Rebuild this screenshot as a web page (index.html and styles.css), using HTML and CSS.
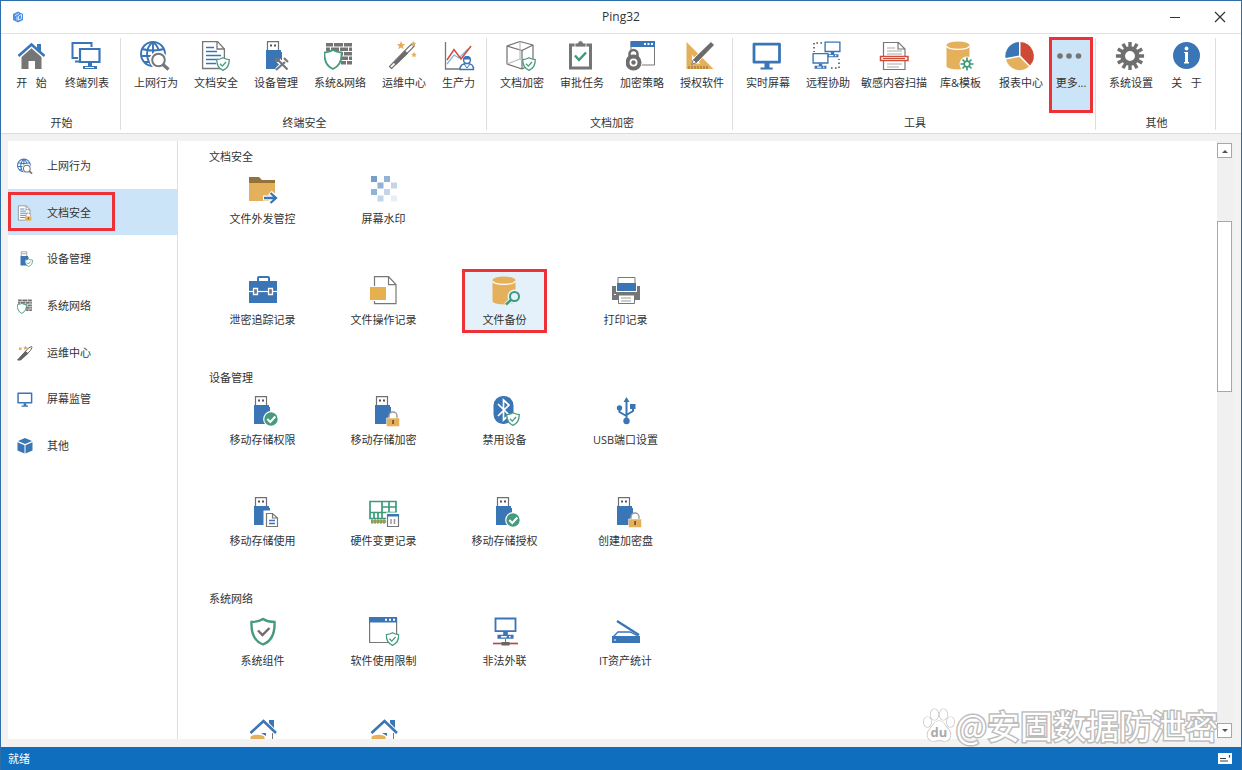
FILE: index.html
```html
<!DOCTYPE html>
<html lang="zh-CN">
<head>
<meta charset="utf-8">
<title>Ping32</title>
<link rel="stylesheet" href="styles.css">
</head>
<body>
<svg class="sprite" aria-hidden="true">
  <defs>
    <symbol id="shield" viewBox="0 0 14 14"><path d="M7 .8C9 2 11 2.5 13.2 2.6 13.4 8 11.500 11.500 7 13.300 2.500 11.500.600 8 .800 2.600 3 2.500 5 2 7 .8z" fill="#fff" stroke="#479a7c" stroke-width="1.300"/><path d="M4 6.800l2.300 2.300L10 5" fill="none" stroke="#479a7c" stroke-width="1.300"/></symbol>
    <symbol id="stick" viewBox="0 0 32 32"><path d="M8.500 11V1.600h11V11" fill="#fff" stroke="#6f6f6f" stroke-width="1.200"/><path d="M11 4.500h2v2h-2zM15 4.500h2v2h-2z" fill="#555"/><path d="M7 10h15v2h1v17H7z" fill="#3a75b5"/></symbol>
    <symbol id="globe" viewBox="0 0 32 32"><g fill="none" stroke="#3a75b5" stroke-width="1.900"><circle cx="13" cy="14" r="12"/><path d="M13 2C5 8 5 20 13 26M13 2c8 6 8 18 0 24M13 2v24M2 9q11 3 22 0M1 16h24M4 22h18"/></g><path d="M22 24l6 5.500" stroke="#fff" stroke-width="6"/><circle cx="18.500" cy="20" r="6.500" fill="#fff" stroke="#fff" stroke-width="5"/><circle cx="18.500" cy="20" r="6.300" fill="#fff" stroke="#777" stroke-width="2"/><path d="M23 24.500l5.500 5" stroke="#777" stroke-width="3.200"/></symbol>
    <symbol id="doc" viewBox="0 0 32 32"><path d="M2.600 1.600h15L24.400 9v19.500H2.600z" fill="#fff" stroke="#777" stroke-width="1.300"/><path d="M17 1.600V9h7.400" fill="none" stroke="#777" stroke-width="1.300"/><path d="M6 7.500h8M6 11.500h11M6 15.500h15M6 19.500h12M6 23.500h10" stroke="#3a75b5" stroke-width="1.500"/></symbol>
    <symbol id="lock" viewBox="0 0 14 16"><path d="M2 6h10v3H2z" fill="#fff"/><path d="M3 8V5a4 4 0 0 1 8 0v3" fill="#fff" stroke="#999" stroke-width="1.400"/><path d="M.500 7h13v8.500H.500z" fill="#e5b05b" stroke="#fff" stroke-width=".500"/><path d="M6.200 9h1.800v4H6.200z" fill="#76552a"/></symbol>
    <symbol id="bricks" viewBox="0 0 32 32"><path d="M2 3h7v3.500H2zM10 3h9v3.500h-9zM20 3h8v3.500h-8zM2 7.500h4V11H2zM7 7.500h8V11H7zM16 7.500h8V11h-8zM25 7.500h3V11h-3zM10 12h9v3.500h-9zM20 12h8v3.500h-8zM16 16.500h8V20h-8zM25 16.500h3V20h-3zM17 21h5v3.500h-5zM23 21h5v3.500h-5z" fill="#747474"/><path d="M9 10c3 2 5 2 8.500 2.500C18 20 15.500 26 9 29 2.500 26 0 20 .500 12.500 4 12 6 12 9 10z" fill="#fff" stroke="#479a7c" stroke-width="1.800"/></symbol>
    <symbol id="wand" viewBox="0 0 32 32"><path d="M3.500 28.500l-2-2L21 6.500l3.500-3 2 2-3 3.500z" fill="#fff" stroke="#777" stroke-width="1.200" stroke-linejoin="round"/><path d="M5.500 22.500L17 10.500l3 3L8 25z" fill="#6c6c6c"/><g fill="#e5ad5b"><path d="M13 1l1.200 3 3 .300-2.300 2 .700 3-2.600-1.700-2.600 1.700.700-3-2.300-2 3-.300zM25.500 1l.900 1.700 1.900.200-1.400 1.300.300 2-1.700-1-1.700 1 .300-2-1.400-1.300 1.900-.200zM26 12l.900 1.700 1.900.200-1.400 1.300.300 2-1.700-1-1.700 1 .300-2-1.400-1.300 1.900-.200z"/></g></symbol>
    <symbol id="monitor" viewBox="0 0 32 32"><path d="M2 4.200h25.500v18H2z" fill="#fff" stroke="#3a75b5" stroke-width="2.800" stroke-linejoin="round"/><path d="M12.500 23h5v4.500h3.200v2H8.500v-2h4z" fill="#3a75b5"/></symbol>
    <symbol id="cylinder" viewBox="0 0 32 32"><path d="M1.500 5v21c0 4.500 23 4.500 23 0V5z" fill="#e5b05b"/><ellipse cx="13" cy="5" rx="11.500" ry="3.500" fill="#e5b05b"/><path d="M1.500 6c2 4.500 21 4.500 23 0" fill="none" stroke="#fff" stroke-width="1.200"/></symbol>
    <symbol id="window" viewBox="0 0 32 32"><path d="M1.600 2h27v24.500h-27z" fill="#fff" stroke="#777" stroke-width="1.200"/><path d="M1 1h28v5.500H1z" fill="#3a75b5"/><path d="M17 2.800h2v2h-2zM21 2.800h2v2h-2zM25 2.800h2v2h-2z" fill="#fff"/></symbol>
    <symbol id="pc" viewBox="0 0 20 20"><path d="M1.300 1.300h17.400v11H1.300z" fill="#fff" stroke="#3a75b5" stroke-width="1.600"/><path d="M8 13h4v2.500h5V19H3v-3.500h5z" fill="#3a75b5"/><path d="M6 17.200h5M13 17.200h1.500" stroke="#fff" stroke-width="1.200"/></symbol>
    <symbol id="ok" viewBox="0 0 16 16"><circle cx="8" cy="8" r="7.300" fill="#479a7c" stroke="#fff" stroke-width="1.200"/><path d="M4.300 8l3 3 5-5.500" fill="none" stroke="#fff" stroke-width="2"/></symbol>
    <symbol id="house" viewBox="0 0 32 32"><path d="M22 3h5v8l-5-5z" fill="#3a75b5"/><path d="M3.500 16L16.500 4 29 16" fill="none" stroke="#3a75b5" stroke-width="2.600"/><path d="M25.500 16v14" stroke="#777"/><path d="M14 16h5v3z" fill="#3a75b5"/><ellipse cx="10.500" cy="20" rx="7" ry="2.200" fill="#e5b05b"/><path d="M3.500 20h14v9h-14z" fill="#e5b05b"/></symbol>
    <symbol id="gear" viewBox="0 0 32 32"><g fill="none" stroke="currentColor"><circle cx="16" cy="16" r="7.800" stroke-width="5"/><path stroke-width="3.600" d="M16 1v6M16 25v6M1 16h6M25 16h6M8.500 3l3 5.200M20.500 23.800l3 5.200M3 8.500l5.200 3M23.800 20.500l5.200 3M3 23.500l5.200-3M23.800 11.500l5.200-3M8.500 29l3-5.200M20.500 8.200l3-5.200"/></g></symbol>
  </defs>
</svg>

<div class="app">
  <header class="titlebar">
    <svg class="logo" viewBox="0 0 12 12"><path d="M6 .500l5 2.500v6L6 11.500 1 9V3z" fill="#4c8fe8"/><path d="M3 4.500l4-2M5 5.500v4M6.500 5l3-1.500v4L6.500 9z" fill="none" stroke="#d6e8ff"/></svg>
    <h1>Ping32</h1>
    <div class="controls">
      <button aria-label="最小化"><svg viewBox="0 0 12 12"><path d="M1 6.500h10" stroke="#333"/></svg></button>
      <button aria-label="关闭"><svg viewBox="0 0 12 12"><path d="M1 1l10 10M11 1L1 11" stroke="#333" stroke-width="1.200"/></svg></button>
    </div>
  </header>

  <nav class="ribbon">
    <section class="group">
      <div class="items">
        <button class="tool short"><svg class="icon" viewBox="0 0 32 32"><path d="M21 4h4v10l-4-4z" fill="#3a75b5"/><path d="M5.500 16.500l10-9 10 9V29H19v-8h-6.500v8h-7z" fill="#757575"/><path d="M2.500 16.500L15.500 5l13 11.500" fill="none" stroke="#fff" stroke-width="5"/><path d="M21 4h4v8l-4-4z" fill="#3a75b5"/><path d="M2.500 16L15.500 4.500l13 11.500" fill="none" stroke="#3a75b5" stroke-width="2.600"/></svg><span>开&ensp; 始</span></button>
        <button class="tool"><svg class="icon" viewBox="0 0 32 32"><path d="M1.500 15V3h19v4M7 18H1.500v-3M4 21.500h4" fill="none" stroke="#3a75b5" stroke-width="2"/><path d="M9 9h19.500v13H9z" fill="#fff" stroke="#3a75b5" stroke-width="2.200"/><path d="M17 22h4v4h5v3H12v-3h5z" fill="#3a75b5"/><path d="M14 27.500h9" stroke="#fff"/></svg><span>终端列表</span></button>
      </div>
      <h2>开始</h2>
    </section>
    <section class="group">
      <div class="items">
        <button class="tool"><svg class="icon"><use href="#globe"/></svg><span>上网行为</span></button>
        <button class="tool"><svg class="icon" viewBox="0 0 32 32"><use href="#doc" width="32" height="32"/><use href="#shield" x="16" y="17" width="14" height="14"/></svg><span>文档安全</span></button>
        <button class="tool"><svg class="icon" viewBox="0 0 32 32"><use href="#stick" x="-1" width="32" height="32"/><g fill="none" stroke="#fff" stroke-width="5"><path d="M18 20l10 10M27 20L17 30"/></g><g fill="none" stroke="#777" stroke-width="2.200"><path d="M19 21l8.500 8.500M25 22l-9 8M16 18v3h3v-3M24 18l4 4"/></g></svg><span>设备管理</span></button>
        <button class="tool"><svg class="icon"><use href="#bricks"/></svg><span>系统&amp;网络</span></button>
        <button class="tool"><svg class="icon"><use href="#wand"/></svg><span>运维中心</span></button>
        <button class="tool"><svg class="icon" viewBox="0 0 32 32"><path d="M2.500 2v27H29" fill="none" stroke="#777" stroke-width="1.300"/><path d="M4 24l7-9 5 3 9-9" fill="none" stroke="#8bb5dc" stroke-width="1.300"/><path d="M4 20l7-10.500 7 9.500L28 6" fill="none" stroke="#cf4c3b" stroke-width="1.500"/><path d="M17 29.500c0-5 3-6 7-6s6.500 1 6.500 6z" fill="#fff" stroke="#3a75b5" stroke-width="1.400"/><path d="M21 24l3 4 3-4" fill="none" stroke="#3a75b5"/><circle cx="24" cy="20" r="3.400" fill="#fff" stroke="#3a75b5" stroke-width="1.400"/><path d="M20.500 19.500a3.500 3.500 0 0 1 7 0z" fill="#3a75b5"/></svg><span>生产力</span></button>
      </div>
      <h2>终端安全</h2>
    </section>
    <section class="group flush">
      <div class="items">
        <button class="tool"><svg class="icon" viewBox="0 0 32 32"><g fill="none" stroke="#6f6f6f" stroke-width="1.200" stroke-linejoin="round"><path d="M1 6l13-4.500L27 5l-11 5.500zM1 6v18l15 5V10.500M27 5v18l-11 6"/><path d="M14 1.500V19L1 24M14 19l13 4" stroke="#bbb"/></g><use href="#shield" x="16" y="17" width="14" height="14"/></svg><span>文档加密</span></button>
        <button class="tool"><svg class="icon" viewBox="0 0 32 32"><path d="M4.500 5h20v23h-20z" fill="#fff" stroke="#757575" stroke-width="3"/><path d="M9 3h3c0-3 5-3 5 0h3v4H9z" fill="#757575" stroke="#fff" stroke-width=".800"/><path d="M9 15.500l4 4.500 7-7.500" fill="none" stroke="#3c9b78" stroke-width="2.500"/></svg><span>审批任务</span></button>
        <button class="tool"><svg class="icon" viewBox="0 0 32 32"><path d="M5 2h23.500v23H5z" fill="#fff" stroke="#777"/><path d="M4.500 1H29v6H4.500z" fill="#3a75b5"/><path d="M18 3h2v2h-2zM21.500 3h2v2h-2zM25 3h2v2h-2z" fill="#fff"/><circle cx="7.500" cy="22" r="9" fill="#fff"/><path d="M3.500 17v-3a4 4 0 0 1 8 0v3" fill="#fff" stroke="#6d6d6d" stroke-width="2.500"/><circle cx="7.500" cy="22.500" r="6" fill="#fff" stroke="#6d6d6d" stroke-width="4"/><circle cx="7.500" cy="22.500" r="2.200" fill="#6d6d6d"/></svg><span>加密策略</span></button>
        <button class="tool"><svg class="icon" viewBox="0 0 32 32"><path d="M.500 2l27 27H.500zM6 15v8.500h8.500z" fill="#e5b05b" fill-rule="evenodd"/><path d="M3 26v3M6 26v3M9 26v3M12 26v3M15 26v3M18 26v3M21 26v3" stroke="#8b6a35"/><path d="M5.500 24.500L8 18 25 1.500l3.500 3.500L12 22z" fill="#6b6b6b" stroke="#fff"/><path d="M5.500 24.500l2-5 3 3z" fill="#fff" stroke="#6b6b6b"/></svg><span>授权软件</span></button>
      </div>
      <h2>文档加密</h2>
    </section>
    <section class="group">
      <div class="items">
        <button class="tool"><svg class="icon"><use href="#monitor"/></svg><span>实时屏幕</span></button>
        <button class="tool"><svg class="icon" viewBox="0 0 32 32"><use href="#pc" x="12" y="1" width="17" height="17"/><use href="#pc" x="0" y="12.500" width="17" height="17"/><path d="M10 3H2v9M19 28h8v-9" fill="none" stroke="#555" stroke-width="1.600" stroke-dasharray="1.600 2.400"/></svg><span>远程协助</span></button>
        <button class="tool wide"><svg class="icon" viewBox="0 0 32 32"><path d="M5.500 2.500h15L27 9v20.500H5.500zM20 2.500V9h7" fill="#fff" stroke="#777" stroke-width="1.200"/><path d="M9 8h8M9 11h15M9 14h15M9 24h15M9 27h12" stroke="#aaa"/><path d="M2.500 16.500H30v4H2.500z" fill="#fff" stroke="#cf4c3b" stroke-width="1.500"/><path d="M5 18.500h22" stroke="#cf4c3b"/></svg><span>敏感内容扫描</span></button>
        <button class="tool loose"><svg class="icon" viewBox="0 0 32 32"><use href="#cylinder" width="32" height="32"/><circle cx="22" cy="24" r="7.500" fill="#fff"/><path d="M22 17.500v13M15.500 24h13M17.500 19.500l9 9M26.500 19.500l-9 9" stroke="#3c9b78" stroke-width="1.700"/><circle cx="22" cy="24" r="2.800" fill="#fff" stroke="#3c9b78" stroke-width="1.700"/></svg><span>库&amp;模板</span></button>
        <button class="tool"><svg class="icon" viewBox="0 0 32 32"><path d="M14 15.500V2A14 14 0 0 0 .500 18z" fill="#3a75b5"/><path d="M15.500 15.500V2A14 14 0 0 1 25 25.500z" fill="#cf4a35"/><path d="M14.500 17l9.500 9.500A14 14 0 0 1 1 19.500z" fill="#e5b05b"/></svg><span>报表中心</span></button>
        <button class="tool more"><svg class="icon" viewBox="0 0 32 32"><g fill="#757575"><circle cx="5" cy="16" r="2.800"/><circle cx="14" cy="16" r="2.800"/><circle cx="23.500" cy="16" r="2.800"/></g></svg><span>更多...</span></button>
      </div>
      <h2>工具</h2>
    </section>
    <section class="group">
      <div class="items">
        <button class="tool"><svg class="icon gray" viewBox="0 0 32 32"><use href="#gear" x="0" y="1" width="30" height="30"/></svg><span>系统设置</span></button>
        <button class="tool short"><svg class="icon" viewBox="0 0 32 32"><circle cx="15.500" cy="15.500" r="13.500" fill="#3a75b5"/><circle cx="15.500" cy="8.500" r="1.900" fill="#fff"/><path d="M13 12h4v11h-3V13h-1zM13 22h5v1.500h-5z" fill="#fff"/></svg><span>关&ensp; 于</span></button>
      </div>
      <h2>其他</h2>
    </section>
  </nav>

  <div class="workspace">
    <aside class="sidebar">
      <button><svg viewBox="0 0 32 32"><use href="#globe" width="34" height="34"/></svg><span>上网行为</span></button>
      <button class="selected"><svg viewBox="0 0 32 32"><use href="#doc" width="34" height="34"/><use href="#lock" x="15" y="15" width="15" height="17"/></svg><span>文档安全</span></button>
      <button><svg viewBox="0 0 32 32"><use href="#stick" width="32" height="32"/><use href="#shield" x="15" y="15" width="17" height="17"/></svg><span>设备管理</span></button>
      <button><svg viewBox="0 0 32 32"><use href="#bricks" width="34" height="34"/></svg><span>系统网络</span></button>
      <button><svg viewBox="0 0 32 32"><path d="M1 30L23 6l6-3 1 2-3 6-20 19z" fill="#fff" stroke="#666" stroke-width="2"/><path d="M1 30l16-18 6 5L8 30z" fill="#666"/><path d="M17 1l1.500 3 3 .500-2 2 .500 3-3-1.500-3 1.500.500-3-2-2 3-.500zM4 5h5v5H4z" fill="#e5ad5b"/></svg><span>运维中心</span></button>
      <button><svg viewBox="0 0 32 32"><use href="#monitor" width="34" height="34"/></svg><span>屏幕监管</span></button>
      <button><svg viewBox="0 0 32 32"><path d="M16 0l14 6-14 6L2 6zM1 8.500l14 6V31L1 25zM31 8.500l-14 6V31l14-6z" fill="#3a75b5"/></svg><span>其他</span></button>
    </aside>

    <main class="content">
      <section>
        <h2>文档安全</h2>
        <div class="tiles">
          <button class="tile"><svg class="icon" viewBox="0 0 32 32"><path d="M2 3h10l3 3h13v4H2z" fill="#92713a"/><path d="M2 9h26v18H2z" fill="#e5b05b"/><path d="M16 24h13M23 18.500l6 5.500-6 5.500" stroke="#fff" stroke-width="5" fill="none"/><path d="M17 24h12M23.500 19l5.500 5-5.500 5" stroke="#3a75b5" stroke-width="2.300" fill="none"/></svg><span>文件外发管控</span></button>
          <button class="tile"><svg class="icon" viewBox="0 0 32 32"><g fill="#3a75b5"><path opacity=".7" d="M3 2h6v6H3z"/><path opacity=".55" d="M16 2h6v6h-6zM9.500 8.500h6v6h-6zM3 15h6v6H3z"/><path opacity=".3" d="M23 8.500h6v6h-6zM16 15h6v6h-6zM9.500 21.500h6v6h-6z"/><path opacity=".12" d="M23 21.500h6v6h-6z"/></g></svg><span>屏幕水印</span></button>
          <span></span><span></span>
          <button class="tile"><svg class="icon" viewBox="0 0 32 32"><path d="M11 6V3q0-1 1-1h9q1 0 1 1v3" fill="none" stroke="#3a75b5" stroke-width="2"/><path d="M2 6h28v22H2z" fill="#3a75b5"/><path d="M2 16.500h28" stroke="#fff" stroke-width="1.200"/><path d="M6.500 13.500h4v6h-4zM21.500 13.500h4v6h-4z" fill="#777" stroke="#fff" stroke-width="1.300"/></svg><span>泄密追踪记录</span></button>
          <button class="tile"><svg class="icon" viewBox="0 0 32 32"><path d="M6.500 1.600h14l7.500 8v19H6.500zM20.500 1.600v8H28" fill="#fff" stroke="#777" stroke-width="1.200"/><path d="M1.500 11.500h17v14h-17z" fill="#e5b04f" stroke="#fff"/></svg><span>文件操作记录</span></button>
          <button class="tile active"><svg class="icon" viewBox="0 0 32 32"><use href="#cylinder" x="2" width="32" height="32"/><circle cx="25.500" cy="21.500" r="5" fill="#e5f1fa" stroke="#e5f1fa" stroke-width="4"/><path d="M22 25l-5 5" stroke="#e5f1fa" stroke-width="5"/><circle cx="25.500" cy="21.500" r="4.500" fill="none" stroke="#3c9b78" stroke-width="2"/><path d="M22.500 24.500L17 29.500" stroke="#3c9b78" stroke-width="2.500"/></svg><span>文件备份</span></button>
          <button class="tile"><svg class="icon" viewBox="0 0 32 32"><path d="M8 2.500h17v10H8z" fill="#fff" stroke="#777"/><path d="M7 8h19v8H7z" fill="#3a75b5"/><path d="M2 11h4v6h21v-6h3v14H2z" fill="#757575"/><path d="M8.500 20h16v8.500h-16z" fill="#fff" stroke="#777"/><path d="M11 23h10M11 26h10" stroke="#999"/><path d="M4 19h2v1H4z" fill="#fff"/></svg><span>打印记录</span></button>
        </div>
      </section>
      <section>
        <h2>设备管理</h2>
        <div class="tiles">
          <button class="tile"><svg class="icon" viewBox="0 0 32 32"><use href="#stick" width="32" height="32"/><use href="#ok" x="16" y="16" width="16" height="16"/></svg><span>移动存储权限</span></button>
          <button class="tile"><svg class="icon" viewBox="0 0 32 32"><use href="#stick" width="32" height="32"/><use href="#lock" x="18" y="16" width="14" height="16"/></svg><span>移动存储加密</span></button>
          <button class="tile"><svg class="icon" viewBox="0 0 32 32"><rect x="4.500" y="1" width="20" height="28" rx="9.500" fill="#3a75b5"/><path d="M9 9l11 11-5.500 5V5l5.500 5L9 21" fill="none" stroke="#fff" stroke-width="1.700"/><use href="#shield" x="17" y="17" width="14" height="14"/></svg><span>禁用设备</span></button>
          <button class="tile"><svg class="icon" viewBox="0 0 32 32"><path d="M16.500 5v20M16.500 21L9.500 17v-4M16.500 20l6.500-4v-4" fill="none" stroke="#3a75b5" stroke-width="2"/><path d="M13.500 7l3-5 3 5zM20 9h5.500v5H20z" fill="#3a75b5"/><circle cx="9.500" cy="13" r="2.700" fill="#3a75b5"/><circle cx="16.500" cy="26" r="3.200" fill="#3a75b5"/></svg><span>USB端口设置</span></button>
          <button class="tile"><svg class="icon" viewBox="0 0 32 32"><use href="#stick" width="32" height="32"/><path d="M18 16h8l5 5v10H18z" fill="#fff" stroke="#fff" stroke-width="3"/><path d="M19.500 17.500h6l5 4.500v8.500h-11zM25.500 17.500V22h5" fill="#fff" stroke="#777" stroke-width="1.200"/><path d="M22 24.500h6M22 27.500h6" stroke="#3a75b5" stroke-width="1.300"/></svg><span>移动存储使用</span></button>
          <button class="tile"><svg class="icon" viewBox="0 0 32 32"><path d="M2 5.500h26v17H2zM14 5.500v17M2 16.500h26M14 11h14M21 5.500v17M6 16.500v6M10 16.500v6" fill="none" stroke="#3c9b78" stroke-width="1.700"/><path d="M3 24h15v3H3z" fill="#b5a95a"/><path d="M4 23v5M7 23v5M10 23v5M13 23v5M16 23v5" stroke="#55966b"/><path d="M18 16.500h14V32H18z" fill="#fff"/><path d="M19.500 18.500h11v12h-11z" fill="#fff" stroke="#777" stroke-width="1.200"/><path d="M19 18h12v2.500H19z" fill="#3a75b5"/><path d="M23 23v5M26.500 23v5" stroke="#999" stroke-width="1.500"/></svg><span>硬件变更记录</span></button>
          <button class="tile"><svg class="icon" viewBox="0 0 32 32"><use href="#stick" width="32" height="32"/><use href="#ok" x="16" y="16" width="16" height="16"/></svg><span>移动存储授权</span></button>
          <button class="tile"><svg class="icon" viewBox="0 0 32 32"><use href="#stick" width="32" height="32"/><use href="#lock" x="18" y="16" width="14" height="16"/></svg><span>创建加密盘</span></button>
        </div>
      </section>
      <section>
        <h2>系统网络</h2>
        <div class="tiles">
          <button class="tile"><svg class="icon" viewBox="0 0 32 32"><path d="M16 3c4 2.500 7 3 11.500 3C28 17 25 25 16 28.500 7 25 4 17 4.500 6 9 6 12 5.500 16 3z" fill="#fff" stroke="#479a7c" stroke-width="2.400"/><path d="M11 14.500l4.500 4.500 7-7" fill="none" stroke="#706a70" stroke-width="2.400"/></svg><span>系统组件</span></button>
          <button class="tile"><svg class="icon" viewBox="0 0 32 32"><use href="#window" width="32" height="32"/><use href="#shield" x="17.500" y="16" width="14" height="14"/></svg><span>软件使用限制</span></button>
          <button class="tile"><svg class="icon" viewBox="0 0 32 32"><use href="#pc" x="5" y="1" width="23" height="23"/><path d="M4 27.500h25" stroke="#b64c45" stroke-width="1.700"/><path d="M16.500 23v4" stroke="#777"/><path d="M12.500 26h8v3.500h-8z" fill="#666"/></svg><span>非法外联</span></button>
          <button class="tile"><svg class="icon" viewBox="0 0 32 32"><path d="M7 5l22 14" stroke="#3a75b5" stroke-width="2.300"/><path d="M3 21l5-5h12l8 4" fill="#fff" stroke="#3a75b5" stroke-width="1.300"/><path d="M2 20h28v7H2z" fill="#3a75b5"/><path d="M4 24h2" stroke="#fff"/></svg><span>IT资产统计</span></button>
          <button class="tile" aria-label="内网"><svg class="icon"><use href="#house"/></svg></button>
          <button class="tile" aria-label="外网"><svg class="icon"><use href="#house"/></svg></button>
        </div>
      </section>
    </main>

    <div class="scrollbar">
      <button aria-label="向上滚动"><svg viewBox="0 0 8 4"><path d="M1 4l3-3 3 3z" fill="#555"/></svg></button>
      <div class="track"><div class="thumb"></div></div>
      <button aria-label="向下滚动"><svg viewBox="0 0 8 4"><path d="M1 0l3 3 3-3z" fill="#555"/></svg></button>
    </div>

    <div class="watermark">
      <svg viewBox="0 0 32 34"><g fill="#fff" stroke="#bcbcbc" stroke-width="1.200"><ellipse cx="4.500" cy="14" rx="3.700" ry="5"/><ellipse cx="11.500" cy="6.500" rx="3.900" ry="5.400"/><ellipse cx="20.500" cy="6.500" rx="3.900" ry="5.400"/><ellipse cx="27.500" cy="14" rx="3.700" ry="5"/><path d="M16 13c5 0 6 5 9 8 5 5 2 12-3 12-3 0-4-.700-6-.700s-3 .700-6 .700c-5 0-8-7-3-12 3-3 4-8 9-8z"/></g><text x="16" y="29" text-anchor="middle">du</text></svg>
      <span>@安固数据防泄密</span>
    </div>
  </div>

  <footer class="status">
    <span>就绪</span>
    <svg viewBox="0 0 14 11"><path d="M0 0h14v11H0z" fill="#fff"/><path d="M2 5.500h6M2 8h8M11.500 2v2.500" stroke="#345" stroke-width="1.200"/></svg>
  </footer>
</div>
</body>
</html>
```

FILE: styles.css
```css
*, ::after { box-sizing: border-box; }

body {
  margin: 0;
  font: 11px/20px "Open Sans", "Noto Sans CJK SC", sans-serif;
  color: #333;
}

h1, h2 { margin: 0; font-size: inherit; font-weight: 400; }

button {
  margin: 0;
  padding: 0;
  border: 0;
  background: none;
  font: inherit;
  color: inherit;
  white-space: nowrap;
}

.sprite { position: absolute; width: 0; height: 0; }

.app {
  display: flex;
  flex-direction: column;
  height: 100vh;
  overflow: hidden;
  background: #f2f2f2;
  border: solid #2f6fa9;
  border-width: 1px 1px 0;
}

.titlebar {
  display: grid;
  grid-template-columns: 1fr auto 1fr;
  align-items: center;
  height: 33px;
  padding: 0 11px;
  background: #fff;
  border-bottom: 1px solid #e3e3e3;
}
.titlebar h1 { font-size: 12px; }
.logo { width: 12px; height: 12px; }
.controls { display: flex; justify-content: flex-end; gap: 25px; }
.controls button { display: flex; padding: 4px; }
.controls svg { width: 12px; height: 12px; }

.ribbon {
  display: flex;
  height: 100px;
  padding: 4px 0 3px;
  background: #fff;
  border-bottom: 1px solid #dcdcdc;
}
.group {
  display: flex;
  flex-direction: column;
  flex: none;
  justify-content: space-between;
  padding: 2px 3px 0 5px;
  border-right: 1px solid #dedede;
  text-align: center;
}
.flush { padding-right: 0; }
.items { display: flex; }
.group h2 { line-height: 14px; }

.tool {
  display: flex;
  flex-direction: column;
  align-items: center;
  height: 70px;
  padding: 0 8px;
}
.tool span { line-height: 22px; }
.tool.short { min-width: 51px; }
.tool.wide { padding: 0 3px; }
.tool.loose { padding: 0 10px; }
.tool.more {
  margin: 0 2px 0 1px;
  padding: 0 3px;
  background: #cce4f7;
  outline: 3px solid #ed3237;
}

.icon { width: 32px; height: 32px; flex: none; }
.gray { color: #6f6f6f; }

.workspace {
  position: relative;
  display: flex;
  flex: 1;
  min-height: 0;
  margin: 7px 8px 8px 7px;
  background: #fff;
}

.sidebar {
  display: grid;
  grid-template-rows: repeat(7, 1fr);
  width: 170px;
  height: 327px;
  flex: none;
  margin-top: 1px;
}
.sidebar button {
  position: relative;
  display: flex;
  align-items: center;
  gap: 14px;
  padding: 1px 0 0 9px;
}
.sidebar svg { width: 16px; height: 16px; }
.selected { background: #cce4f7; }
.selected::after {
  content: "";
  position: absolute;
  top: 3px;
  bottom: 4px;
  left: 0;
  width: 107px;
  border: 3px solid #ed3237;
}

.content {
  display: flex;
  flex-direction: column;
  flex: 1;
  gap: 35px;
  min-width: 0;
  margin-left: -1px;
  padding: 3px 0 0 24px;
  overflow: hidden;
  border-left: 1px solid #dedede;
}
.content section { flex: none; }
.content h2 { padding-left: 7px; line-height: 26px; }

.tiles {
  display: grid;
  grid-template-columns: repeat(4, 121px);
  justify-items: center;
  gap: 43px 0;
  padding-top: 1px;
}
.tile {
  display: flex;
  flex-direction: column;
  align-items: center;
  gap: 3px;
  width: 79px;
  height: 58px;
  padding-top: 3px;
}
.active { background: #e5f1fa; outline: 3px solid #ed3237; }

.scrollbar {
  display: flex;
  flex-direction: column;
  width: 16px;
  padding: 2px 1px 1px 0;
  background: #f0f0f0;
}
.scrollbar button {
  display: flex;
  align-items: center;
  justify-content: center;
  height: 15px;
  background: #fff;
  border: 1px solid #a8a8a8;
}
.scrollbar svg { width: 8px; height: 4px; }
.track { flex: 1; padding-top: 63px; }
.thumb { height: 34%; background: #fff; border: 1px solid #a8a8a8; }

.watermark {
  position: absolute;
  right: 15px;
  bottom: -8px;
  display: flex;
  align-items: center;
  gap: 1px;
  font: 400 33px/44px "Noto Sans CJK SC", sans-serif;
  color: #fff;
  -webkit-text-stroke: 3px #bcbcbc;
  paint-order: stroke fill;
  pointer-events: none;
}
.watermark svg { width: 32px; height: 34px; }
.watermark text {
  font: 700 13px "Open Sans", sans-serif;
  fill: #aaa;
  -webkit-text-stroke: 0;
}

.status {
  display: flex;
  align-items: center;
  justify-content: space-between;
  height: 23px;
  margin: 0 -1px;
  padding: 0 10px 0 8px;
  background: #0f6ebe;
  color: #fff;
}
.status svg { width: 14px; height: 11px; }
```
